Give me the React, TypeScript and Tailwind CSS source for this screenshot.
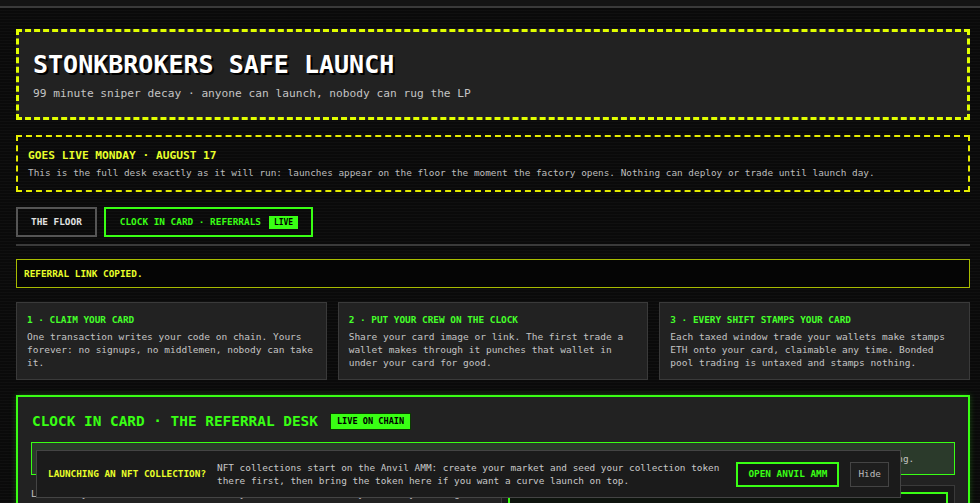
// Safe launch desk: header, launch notice, tabs and the referral desk.
import React, { useState } from 'react';

const steps = [
  {
    title: '1 · CLAIM YOUR CARD',
    body: 'One transaction writes your code on chain. Yours forever: no signups, no middlemen, nobody can take it.',
  },
  {
    title: '2 · PUT YOUR CREW ON THE CLOCK',
    body: 'Share your card image or link. The first trade a wallet makes through it punches that wallet in under your card for good.',
  },
  {
    title: '3 · EVERY SHIFT STAMPS YOUR CARD',
    body: 'Each taxed window trade your wallets make stamps ETH onto your card, claimable any time. Bonded pool trading is untaxed and stamps nothing.',
  },
];

const App: React.FC = () => {
  const [tab, setTab] = useState<'floor' | 'card'>('card');
  const [showNft, setShowNft] = useState(true);

  return (
    <div className="min-h-screen bg-[#0a0a0a] bg-[repeating-linear-gradient(0deg,rgba(255,255,255,0.022)_0px,rgba(255,255,255,0.022)_1px,transparent_1px,transparent_3px)] font-['DejaVu_Sans_Mono',monospace] text-[#c8c8c8]">
      <div className="h-[6px] bg-[#141414]" />
      <div className="h-[2px] bg-[#3a3a3a]" />

      <div className="pl-4 pr-[10px] pt-[21px] pb-10">
        {/* header */}
        <div className="border-[3px] border-dashed border-[#e2ff00] bg-[#222] px-[14px] pt-[18px] pb-[15px]">
          <h1 className="text-[25px] leading-[30px] font-bold text-white [text-shadow:2px_2px_0_#000]">
            STONKBROKERS SAFE LAUNCH
          </h1>
          <p className="mt-[6px] text-[11.2px] leading-[16px] text-[#c4c4c4]">
            99 minute sniper decay · anyone can launch, nobody can rug the LP
          </p>
        </div>

        {/* launch day notice */}
        <div className="mt-[15px] border-2 border-dashed border-[#e6ee00] px-[10px] pt-[11px] pb-[10px]">
          <div className="text-[11.2px] leading-[15px] font-bold text-[#e8ff2a]">GOES LIVE MONDAY · AUGUST 17</div>
          <p className="mt-[3px] text-[9.4px] leading-[14px] text-[#bdbdbd]">
            This is the full desk exactly as it will run: launches appear on the floor the moment the factory opens. Nothing can deploy or trade until launch day.
          </p>
        </div>

        {/* tabs */}
        <div className="mt-[15px] flex gap-[7px]">
          <button
            onClick={() => setTab('floor')}
            className={`h-[30px] border-2 px-[13px] text-[9.4px] font-bold ${
              tab === 'floor' ? 'border-[#39ff14] text-[#39ff14]' : 'border-[#555] text-[#e0e0e0]'
            }`}
          >
            THE FLOOR
          </button>
          <button
            onClick={() => setTab('card')}
            className={`flex h-[30px] items-center gap-[8px] border-2 pl-[14px] pr-[13px] text-[9.4px] font-bold ${
              tab === 'card' ? 'border-[#39ff14] text-[#39ff14]' : 'border-[#555] text-[#e0e0e0]'
            }`}
          >
            <span>CLOCK IN CARD · REFERRALS</span>
            <span className="bg-[#39ff14] px-[5px] text-[8px] leading-[13px] text-black">LIVE</span>
          </button>
        </div>

        <div className="mt-[7px] h-[2px] bg-[#3a3a3a]" />

        {/* copy toast */}
        <div className="mt-[13px] border border-[#a8bc00] bg-[#050505] px-[7px] py-[7px] text-[9.4px] leading-[13px] font-bold text-[#e8ff2a]">
          REFERRAL LINK COPIED.
        </div>

        {/* how it works */}
        <div className="mt-[14px] grid grid-cols-3 gap-[11px]">
          {steps.map((s) => (
            <div key={s.title} className="border border-[#3a3a3a] bg-[#222] px-[10px] pt-[10px] pb-[10px]">
              <div className="text-[9.4px] leading-[14px] font-bold text-[#45ff2a]">{s.title}</div>
              <p className="mt-[3px] text-[9.5px] leading-[13px] text-[#c4c4c4]">{s.body}</p>
            </div>
          ))}
        </div>

        {/* referral desk */}
        <div className="mt-[15px] border-2 border-[#39ff14] bg-[#222] px-[13px] pt-[14px] pb-4 shadow-[0_0_6px_rgba(57,255,20,0.25)]">
          <div className="flex items-center gap-[12px] pl-px">
            <h2 className="text-[14.4px] leading-[20px] font-bold text-[#39ff14]">CLOCK IN CARD · THE REFERRAL DESK</h2>
            <span className="border border-[#0a3a00] bg-[#39ff14] px-[6px] text-[8.6px] leading-[15px] font-bold text-black">
              LIVE ON CHAIN
            </span>
          </div>

          <div className="mt-[11px] border border-[#39ff14] bg-[#2b3a2b] px-[13px] py-[8px] text-[9.4px] leading-[15px] text-[#c4c4c4]">
            Stamps accrue in ETH on every taxed window trade made by wallets clocked in under your card. Claim whenever you like, nothing settles until after bonding.
          </div>

          <div className="mt-[10px] grid grid-cols-2 gap-4">
            <div className="pt-[2px] text-[9.4px] leading-[13px] text-[#c4c4c4]">
              <p>Launch day is the first shift. Claim your card now so every wallet you bring is stamped from the opening bell.</p>
            </div>
            <div className="border border-[#3a3a3a] bg-[#1a1a1a] p-[6px]">
              <div className="h-24 border-2 border-[#39ff14] bg-[#0e140e]" />
            </div>
          </div>
        </div>
      </div>

      {/* nft collection prompt */}
      {showNft && (
        <div className="fixed bottom-[5px] left-[36px] flex w-[865px] items-center gap-[11px] border border-[#444] bg-[#1b1b1b] py-[10px] pl-[11px] pr-[11px]">
          <div className="shrink-0 text-[9.4px] font-bold text-[#e8ff2a]">LAUNCHING AN NFT COLLECTION?</div>
          <p className="min-w-0 flex-1 text-[9.4px] leading-[13px] text-[#c8c8c8]">
            NFT collections start on the Anvil AMM: create your market and seed your collection token there first, then bring the token here if you want a curve launch on top.
          </p>
          <button className="h-[25px] shrink-0 border-2 border-[#39ff14] bg-[#141414] px-[10px] text-[9.4px] font-bold text-[#39ff14]">
            OPEN ANVIL AMM
          </button>
          <button
            onClick={() => setShowNft(false)}
            className="h-[25px] shrink-0 border border-[#444] bg-[#1e1e1e] px-[7px] text-[9.4px] text-[#bbb]"
          >
            Hide
          </button>
        </div>
      )}
    </div>
  );
};

export default App;
